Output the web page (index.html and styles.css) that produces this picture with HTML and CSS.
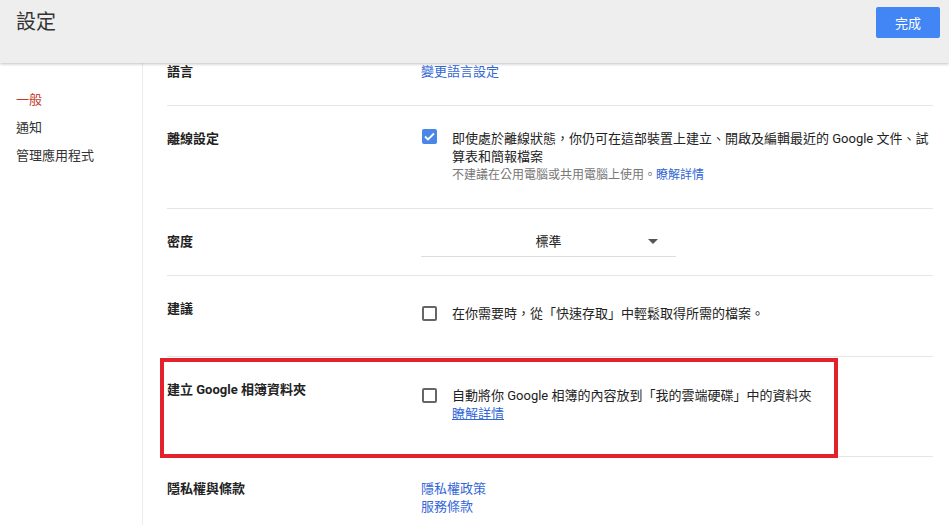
FILE: index.html
```html
<!DOCTYPE html>
<html lang="zh-Hant">
<head>
    <meta charset="UTF-8">
    <meta name="viewport" content="width=device-width, initial-scale=1.0">
    <title>設定</title>
    <link rel="stylesheet" href="styles.css">
</head>
<body>
    <div class="header">
        <div class="title">設定</div>
        <button type="button" class="done-btn">完成</button>
    </div>
    <div class="main">
        <div class="sidebar">
            <div class="nav-item active">一般</div>
            <div class="nav-item">通知</div>
            <div class="nav-item">管理應用程式</div>
        </div>
        <div class="content">
            <div class="row row-first">
                <div class="label">語言</div>
                <div class="control">
                    <a href="#" class="link">變更語言設定</a>
                </div>
            </div>
            <div class="row">
                <div class="label">離線設定</div>
                <div class="control check-row">
                    <span class="checkbox checked">
                        <svg width="11" height="9" viewBox="0 0 11 9"><path d="M1 4.5 L4 7.5 L10 1.5" fill="none" stroke="#fff" stroke-width="1.8"/></svg>
                    </span>
                    <div class="check-text">
                        <div>即使處於離線狀態，你仍可在這部裝置上建立、開啟及編輯最近的 Google 文件、試算表和簡報檔案</div>
                        <div class="hint">不建議在公用電腦或共用電腦上使用。<a href="#" class="link">瞭解詳情</a></div>
                    </div>
                </div>
            </div>
            <div class="row">
                <div class="label">密度</div>
                <div class="control">
                    <div class="dropdown">
                        <span>標準</span>
                        <span class="arrow"></span>
                    </div>
                </div>
            </div>
            <div class="row">
                <div class="label">建議</div>
                <div class="control check-row suggest">
                    <span class="checkbox"></span>
                    <div class="check-text">在你需要時，從「快速存取」中輕鬆取得所需的檔案。</div>
                </div>
            </div>
            <div class="row">
                <div class="label">建立 Google 相簿資料夾</div>
                <div class="control check-row photos">
                    <span class="checkbox"></span>
                    <div class="check-text">
                        <div>自動將你 Google 相簿的內容放到「我的雲端硬碟」中的資料夾</div>
                        <a href="#" class="link underline">瞭解詳情</a>
                    </div>
                </div>
                <div class="mark"></div>
            </div>
            <div class="row row-last">
                <div class="label">隱私權與條款</div>
                <div class="control">
                    <a href="#" class="link block">隱私權政策</a>
                    <a href="#" class="link block">服務條款</a>
                </div>
            </div>
        </div>
    </div>
</body>
</html>
```

FILE: styles.css
```css
body {
    margin: 0;
    font-family: Roboto, "Noto Sans CJK TC", Arial, sans-serif;
    font-size: 13px;
    color: #222;
    background: #fff;
    overflow: hidden;
}

.header {
    position: relative;
    z-index: 2;
    height: 63px;
    background-color: #eeeeee;
    box-shadow: 0 1px 3px rgba(0, 0, 0, 0.25);
    display: flex;
    justify-content: space-between;
    align-items: flex-start;
}

.title {
    font-size: 20px;
    line-height: 24px;
    color: #333;
    padding: 10px 0 0 16px;
}

.done-btn {
    margin: 7px 9px 0 0;
    width: 64px;
    height: 31px;
    border: none;
    border-radius: 2px;
    background-color: #4285f4;
    color: #fff;
    font-family: inherit;
    font-size: 13px;
    cursor: pointer;
}

.main {
    display: flex;
    height: 462px;
}

.sidebar {
    width: 142px;
    flex-shrink: 0;
    border-right: 1px solid #ececec;
    padding-top: 23px;
}

.nav-item {
    padding-left: 16px;
    line-height: 28px;
    color: #333;
}

.nav-item.active {
    color: #c53929;
}

.content {
    flex: 1;
    padding: 0 16px 0 24px;
}

.row {
    position: relative;
    display: flex;
    padding: 24px 0;
    border-bottom: 1px solid #e6e6e6;
    line-height: 18px;
}

.row-first {
    padding-top: 0;
}

.row-last {
    border-bottom: none;
    padding-top: 23px;
}

.label {
    width: 254px;
    flex-shrink: 0;
    font-weight: 700;
    color: #222;
}

.control {
    flex: 1;
}

.link {
    color: #3367d6;
    text-decoration: none;
}

.link.block {
    display: block;
}

.link.underline {
    text-decoration: underline;
}

.check-row {
    display: flex;
    align-items: flex-start;
    gap: 15px;
    max-width: 518px;
}

.check-row.suggest {
    padding: 5px 0 9px;
}

.check-row.photos {
    padding: 6px 0 9px;
}

.checkbox {
    width: 15px;
    height: 15px;
    margin: 1px 0 0 1px;
    flex-shrink: 0;
    box-sizing: border-box;
    border: 2px solid #666;
    border-radius: 2px;
    display: flex;
    align-items: center;
    justify-content: center;
}

.checkbox.checked {
    border: none;
    background-color: #4a86e8;
    margin-top: -1px;
}

.check-text {
    flex: 1;
}

.hint {
    font-size: 12px;
    color: #777;
}

.dropdown {
    position: relative;
    width: 255px;
    text-align: center;
    padding-bottom: 5px;
    border-bottom: 1px solid #ddd;
    margin-bottom: -6px;
}

.arrow {
    position: absolute;
    left: 227px;
    top: 6px;
    border-left: 5px solid transparent;
    border-right: 5px solid transparent;
    border-top: 5px solid #555;
}

.mark {
    position: absolute;
    left: -7px;
    top: 1px;
    width: 678px;
    height: 100px;
    box-sizing: border-box;
    border: 4px solid #e3212b;
}
```
